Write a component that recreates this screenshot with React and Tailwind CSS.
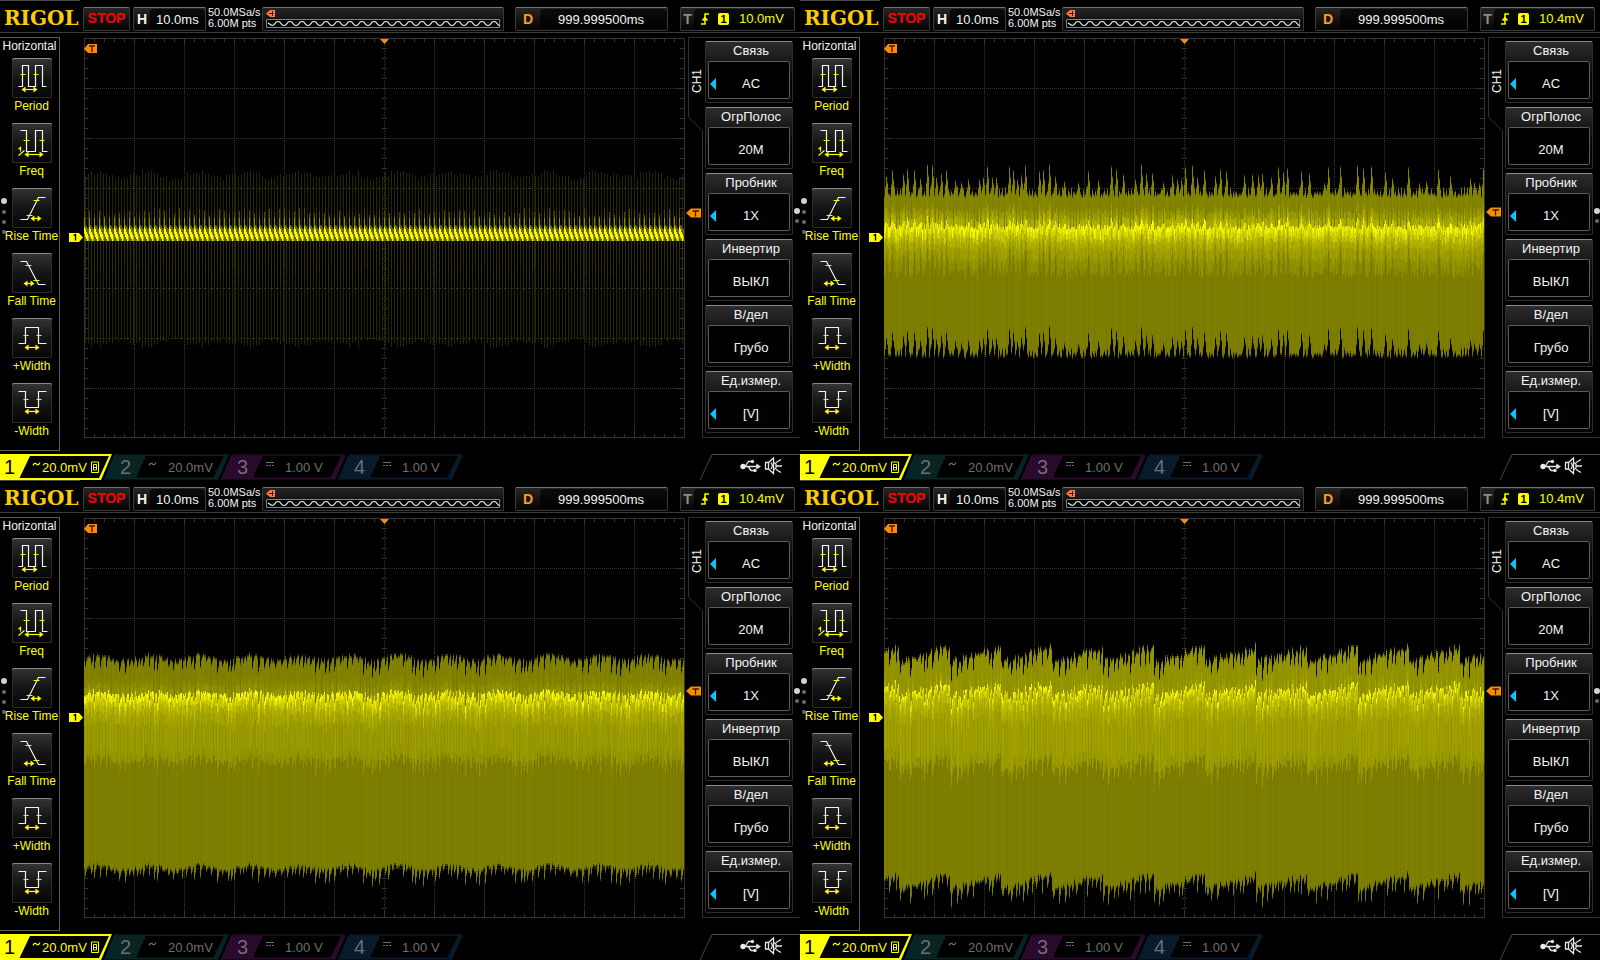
import React from "react";

/* ---------- signal synthesis ---------- */

const X0 = 84;
const X1 = 684;

function makeRandom(seed) {
  let s = seed;
  return () => {
    s = (s * 1664525 + 1013904223) % 4294967296;
    return s / 4294967296;
  };
}

// Collects one-pixel vertical strokes by colour.
function makePainter() {
  const paths = new Map();
  return {
    column(color, x, top, bottom) {
      if (bottom <= top) return;
      const d = `M${x + 0.5} ${Math.round(top)}V${Math.round(bottom)}`;
      paths.set(color, (paths.get(color) || "") + d);
    },
    result: () => [...paths.entries()],
  };
}

function yellow(level) {
  const v = Math.max(0, Math.min(255, Math.round(level / 6) * 6));
  return `rgb(${v},${v},0)`;
}

function ripple(x) {
  return Math.sin(((x - X0) / 50) * Math.PI * 2 - 0.3);
}

function saw(x) {
  return (((x - X0 + 36) % 51) / 51) * 2 - 1;
}

function bandTrace({ seed, top, bottom, bright, midEnd, topLevel, midLevel, glow, follow, offsets, brightSize }) {
  const rnd = makeRandom(seed);
  const offset = offsets(rnd);
  const p = makePainter();
  for (let x = X0; x < X1; x++) {
    const o = offset[x - X0];
    const stripe = x % 3 === 0 ? -4 : 0;
    const t = top - o;
    const b = bottom - o * 0.95;
    const c = bright - o * follow + (rnd() - 0.5) * 4;
    const m = midEnd - o * 0.9 + (rnd() - 0.5) * 6;
    const end = c + brightSize;
    p.column(yellow(topLevel * 0.5), x, t - 2, t);
    p.column(yellow(topLevel + stripe + rnd() * 6), x, t, c);
    p.column(yellow(topLevel + glow * (0.4 + rnd() * 0.4)), x, c - 15, c - 7);
    p.column(yellow(topLevel + glow + rnd() * 14), x, c - 8, c);
    const peak = 212 + rnd() * 43;
    p.column(yellow(peak), x, c, c + brightSize * 0.5);
    p.column(yellow(peak - rnd() * 36), x, c + brightSize * 0.5, end);
    p.column(yellow(176 + rnd() * 36), x, end, end + 5);
    p.column(yellow(midLevel + 14 + rnd() * 22), x, end + 5, end + 12);
    p.column(yellow(midLevel + 4 + rnd() * 14), x, end + 12, end + 22);
    p.column(yellow(midLevel + stripe * 2 + rnd() * 10), x, end + 22, m - 10);
    p.column(yellow(midLevel - 10 + rnd() * 12), x, m - 10, m);
    p.column(yellow(124 + stripe + rnd() * 4), x, m, b);
    p.column(yellow(66), x, b, b + 2);
  }
  return p.result();
}

function sparseTrace() {
  const rnd = makeRandom(11);
  const p = makePainter();
  for (let x = X0 + 1; x < X1; x += 3) {
    const env = Math.sin((x - X0) / 8) * 3 + (rnd() - 0.5) * 6;
    p.column("#272700", x, 175 - env, 343 + env);
    p.column("#323200", x, 212, 262 + rnd() * 30);
  }
  const tooth = [
    [222, 227, 234],
    [225, 229, 237],
    [226, 232, 239],
    [228, 234, 241],
    [229, 236, 241],
  ];
  for (let x = X0; x < X1; x++) {
    const step = (x - X0) % 5;
    const [haze, top, bottom] = tooth[step];
    p.column("#686800", x, haze, 241);
    p.column(step === 4 ? "#b4b400" : "#fafa00", x, top, bottom);
    if (step === 0) {
      p.column("#484800", x, 208 + rnd() * 8, 218);
      p.column("#8c8c00", x, 218, 227);
    }
  }
  return p.result();
}

// Irregular narrow peaks that rise above a lightly toothed floor.
function spikes(rnd) {
  const out = Array.from({ length: X1 - X0 }, (_, i) => (i % 3 === 1 ? rnd() * 7 - 1 : rnd() * 4 - 4));
  let x = 2;
  while (x < out.length) {
    const h = 9 + Math.pow(rnd(), 0.8) * 19;
    out[x] = h;
    if (x > 0) out[x - 1] = Math.max(out[x - 1], h * 0.35);
    if (x + 1 < out.length) out[x + 1] = Math.max(out[x + 1], h * 0.6);
    x += 4 + Math.floor(rnd() * rnd() * 17);
  }
  return out;
}

// Slow wave with sharp dips every few columns.
function dips(wave, amount, depth, noise) {
  return (rnd) => {
    const out = [];
    for (let i = 0; i < X1 - X0; i++) out.push(wave(X0 + i) * amount + (rnd() - 0.5) * noise);
    let i = 1;
    while (i < out.length) {
      const d = (0.25 + rnd() * 0.75) * depth;
      out[i] -= d;
      if (i + 1 < out.length) out[i + 1] -= d * 0.45;
      i += 3 + Math.floor(rnd() * 4);
    }
    return out;
  };
}

const SCREENS = [
  { trigger: "10.0mV", triggerY: 213, trace: sparseTrace() },
  {
    trigger: "10.4mV",
    triggerY: 212,
    trace: bandTrace({
      seed: 7, top: 194, bottom: 353, bright: 227, midEnd: 273, topLevel: 130,
      midLevel: 146, glow: 34, follow: 0.35, brightSize: 10, offsets: spikes,
    }),
  },
  {
    trigger: "10.4mV",
    triggerY: 211,
    trace: bandTrace({
      seed: 23, top: 179, bottom: 387, bright: 213, midEnd: 279, topLevel: 126,
      midLevel: 150, glow: 12, follow: 0.7, brightSize: 8, offsets: dips(ripple, 3, 15, 4),
    }),
  },
  {
    trigger: "10.4mV",
    triggerY: 211,
    trace: bandTrace({
      seed: 41, top: 175, bottom: 401, bright: 209, midEnd: 283, topLevel: 144,
      midLevel: 154, glow: 12, follow: 0.75, brightSize: 6, offsets: dips(saw, 8, 18, 7),
    }),
  },
];

/* ---------- graticule ---------- */

function buildTicks() {
  let d = "";
  for (let x = X0 + 10; x < X1; x += 10) {
    const n = (x - X0) % 50 === 0 ? 7 : 4;
    d += `M${x + 0.5} 38v${n}M${x + 0.5} 438v-${n}M${x + 0.5} 236v4`;
  }
  for (let y = 48; y < 438; y += 10) {
    const n = (y - 38) % 50 === 0 ? 7 : 4;
    d += `M84 ${y + 0.5}h${n}M684 ${y + 0.5}h-${n}M382 ${y + 0.5}h5`;
  }
  return d;
}

function buildGrid() {
  let d = "";
  for (let x = X0 + 50; x < X1; x += 50) d += `M${x + 0.5} 38V438`;
  for (let y = 88; y < 438; y += 50) d += `M84 ${y + 0.5}H684`;
  return d;
}

function buildMemoryWave() {
  let d = "M5 15L9 17.5";
  for (let i = 0; i < 19; i++) d += `M${9 + i * 12} 17.5q2 0 3-2t3-2t3 2t3 2`;
  return d;
}

const TICKS = buildTicks();
const GRID = buildGrid();
const MEMORY_WAVE = buildMemoryWave();

function Plot({ trace, triggerY }) {
  return (
    <svg
      className="h-[420px] min-w-0 flex-1"
      viewBox="60 33 628 420"
      preserveAspectRatio="none"
      role="img"
      aria-label="CH1"
    >
      <g fill="none" shapeRendering="crispEdges">
        <path d={GRID} stroke="#383838" strokeDasharray="1 1" />
        <path d={TICKS} stroke="#343434" />
        <path d="M84.5 38.5H684.5V437.5H84.5Z" stroke="#343434" />
        {trace.map(([color, d]) => (
          <path key={color} d={d} stroke={color} />
        ))}
      </g>
      <path d="M380 39h9l-4.5 5z" fill="#ff8c00" />
      <path d="M84 49l4-5h9v9h-9z" fill="#ff8c00" />
      <path d="M89 46h6M92 46v6" stroke="#3a1c00" strokeWidth="1.5" fill="none" />
      <path d="M69 233h10l4 4.500l-4 4.500h-10z" fill="#ffff00" />
      <path d="M73.500 235.500l2-1v6" stroke="#000" strokeWidth="1.300" fill="none" />
    </svg>
  );
}

/* ---------- measurement icons ---------- */

const MEASURES = [
  { label: "Period", line: "M7 28H11V7H17V28H24V7H31V28H35", marks: "M9 16H14M22 16H27", from: 11, to: 25, y: 31 },
  { label: "Freq", line: "M9 7H15V28H24V7H31V28H36", marks: "M12 17H18M28 17H33M7 25.500l2-1.500V28M7 32L13 27", from: 14, to: 31, y: 31 },
  { label: "Rise Time", line: "M9 31H16L27 9H34", marks: "M15 27H21M22 12H28", from: 20, to: 29, y: 30 },
  { label: "Fall Time", line: "M9 8H15L27 31H34", marks: "M14 12H20M22 27H28", from: 13, to: 22, y: 30 },
  { label: "+Width", line: "M7 25H14V9H27V25H35", marks: "M12 17H17M25 17H30", from: 14, to: 27, y: 29 },
  { label: "-Width", line: "M7 8H14V24H27V8H35", marks: "M12 16H17M25 16H30", from: 14, to: 27, y: 28 },
];

function MeasureIcon({ line, marks, from, to, y }) {
  return (
    <svg className="block h-10 w-10" viewBox="0 0 40 40" fill="none" aria-hidden="true">
      <g transform="translate(-0.5 0.5)">
        <path d={line} stroke="#f4f4f4" strokeWidth="1.2" />
        <path d={marks} stroke="#ffff00" strokeWidth="1.2" />
        <path d={`M${from + 1} ${y}H${to - 1}`} stroke="#ffff00" strokeWidth="1.2" />
        <path
          d={`M${from - 1} ${y}l4-3v6zM${to + 1} ${y}l-4-3v6z`}
          fill="#ffff00"
        />
      </g>
    </svg>
  );
}

function MeasurePanel() {
  return (
    <aside className="relative mt-1 flex h-[414px] w-[60px] shrink-0 flex-col items-center border-t border-r border-b border-[#5c5c5c] pl-1">
      <h2 className="pr-1 text-[12px] leading-4 text-[#f4f4f4]">Horizontal</h2>
      <ul className="mt-1">
        {MEASURES.map((m) => (
          <li key={m.label} className="h-[65px]">
            <button
              type="button"
              className="flex w-14 flex-col items-center whitespace-nowrap text-[12px] leading-4 text-[#ffff00]"
            >
              <span className="block h-10 w-10 rounded-xs bg-linear-to-b from-[#343434] via-[#151515] to-[#060606] shadow-[inset_0_1px_0_#8a8a8a,inset_0_0_0_1px_#2c2c2c]">
                <MeasureIcon {...m} />
              </span>
              {m.label}
            </button>
          </li>
        ))}
      </ul>
      <div className="absolute top-40 left-px flex w-1.5 flex-col items-center gap-1.5">
        <i className="block h-1.5 w-1.5 rounded-full bg-[#d4d4d4]" />
        <i className="block h-1 w-1 rounded-full bg-[#6a6a6a]" />
        <i className="block h-1 w-1 rounded-full bg-[#6a6a6a]" />
        <i className="block h-1 w-1 rounded-full bg-[#6a6a6a]" />
      </div>
    </aside>
  );
}

/* ---------- header ---------- */

const boxClass =
  "flex h-6 items-center rounded-xs border border-[#3a3a3a] border-t-[#757575] bg-linear-to-b from-[#262626] to-[#050505]";

function Header({ trigger }) {
  return (
    <header className="relative flex h-[33px] items-start border-b border-[#3a3a3a] pt-[7px] pr-[5px]">
      <i className="absolute top-0 left-0 block h-px w-20 bg-[#4a4a4a]" />
      <h1 className="w-[83px] shrink-0 pl-1 font-['DejaVu_Serif'] text-[20px] leading-[22px] font-bold text-[#fccb08]">
        RIGOL
      </h1>
      <button
        type="button"
        className={`${boxClass} w-[47px] shrink-0 justify-center text-[14px] leading-4 font-bold text-[#ff0000]`}
      >
        <span className="-mt-0.5">STOP</span>
      </button>
      <button type="button" className={`${boxClass} ml-[3px] w-[73px] shrink-0 text-[#f4f4f4]`}>
        <span className="flex h-5 w-4 items-center justify-center text-[14px] leading-4 font-bold">H</span>
        <span className="flex h-5 flex-1 items-center rounded-sm bg-black/70 pt-0.5 pl-1.5 text-[13px] leading-4">
          10.0ms
        </span>
      </button>
      <p className="ml-0.5 w-[54px] shrink-0 text-[11px] leading-[11px] whitespace-nowrap text-[#f4f4f4]">
        50.0MSa/s
        <br />
        6.00M pts
      </p>
      <div className={`${boxClass} min-w-0 flex-1`}>
        <svg
          className="h-[22px] w-full"
          viewBox="0 0 240 22"
          preserveAspectRatio="none"
          fill="none"
          role="img"
          aria-label="Memory"
        >
          <path d="M3 5.500L7 2H12V9H7Z" fill="#ff7a3c" />
          <path d="M6 5.500h5M9.500 3v5" stroke="#2a1208" />
          <path d="M3.500 11.500H236.500V19.500H3.500Z" fill="#000" stroke="#7c828c" />
          <path d={MEMORY_WAVE} stroke="#f4f4f4" strokeWidth="1.2" />
        </svg>
      </div>
      <button type="button" className={`${boxClass} ml-[11px] w-[153px] shrink-0`}>
        <span className="flex h-5 w-6 items-center justify-center text-[14px] leading-4 font-bold text-[#ff9c14]">
          D
        </span>
        <span className="flex h-5 flex-1 items-center rounded-sm bg-black/70 pt-0.5 pl-[18px] text-[13px] leading-4 text-[#f4f4f4]">
          999.999500ms
        </span>
      </button>
      <button type="button" className={`${boxClass} ml-3 w-[115px] shrink-0`}>
        <span className="flex h-5 w-[13px] items-center justify-center text-[14px] leading-4 font-bold text-[#8c8c8c]">
          T
        </span>
        <span className="flex h-5 flex-1 items-center rounded-sm bg-black/70 text-[13px] leading-4 text-[#ffff00]">
          <svg className="ml-1.5 h-3 w-2.5" viewBox="0 0 10 12" fill="none" aria-hidden="true">
            <path d="M1 11H5V1H9" stroke="#ffff00" strokeWidth="1.500" />
            <path d="M1.500 7.500L5 3.500L8.500 7.500Z" fill="#ffff00" />
          </svg>
          <span className="ml-2 flex h-3 w-[11px] items-center justify-center rounded-xs bg-[#ffff00] text-[11px] leading-3 font-bold text-black">
            1
          </span>
          <span className="ml-2.5">{trigger}</span>
        </span>
      </button>
    </header>
  );
}

/* ---------- soft-key menu ---------- */

const MENU = [
  { title: "Связь", value: "AC", more: true },
  { title: "ОгрПолос", value: "20M" },
  { title: "Пробник", value: "1X", more: true },
  { title: "Инвертир", value: "ВЫКЛ" },
  { title: "В/дел", value: "Грубо" },
  { title: "Ед.измер.", value: "[V]", more: true },
];

function SoftMenu({ triggerY }) {
  return (
    <nav className="relative flex h-[420px] w-28 shrink-0" aria-label="CH1">
      <svg
        className="absolute top-0 -left-3 h-[420px] w-[124px]"
        viewBox="676 33 124 420"
        fill="none"
        aria-hidden="true"
      >
        <path d="M800 37.500H688.500V117L702.500 131V437.500H800" stroke="#303030" />
        <g transform={`translate(0 ${triggerY})`}>
          <path d="M686 0L691-4.500H701V4.500H691Z" fill="#ff8c00" />
          <path d="M692.500-2H699M695.500-2V3.500" stroke="#3a1c00" strokeWidth="1.300" />
        </g>
        <circle cx="797" cy="211" r="3" fill="#d4d4d4" />
        <circle cx="797" cy="221" r="2" fill="#6a6a6a" />
      </svg>
      <div className="relative flex w-[17px] justify-center pt-8 text-[#f4f4f4]">
        <span className="h-7 rotate-180 text-[12px] leading-4 [writing-mode:vertical-rl]">CH1</span>
      </div>
      <ul className="relative flex w-[88px] flex-col gap-1 pt-2">
        {MENU.map((item) => (
          <li key={item.title}>
            <button
              type="button"
              className="flex h-[62px] w-full flex-col rounded-xs border border-[#2e2e2e] border-t-[#8a8a8a] bg-linear-to-b from-[#2c2c2c] to-[#050505] to-70% px-0.5 text-[13px] leading-4 text-[#f4f4f4]"
            >
              <span className="block w-full pt-px pl-1 text-center">{item.title}</span>
              <span className="relative mt-0.5 flex h-[38px] w-full items-center justify-center rounded-xs border border-[#5c5c5c] bg-black pt-2 pl-1">
                {item.more && (
                  <svg className="absolute top-4 left-px h-3 w-1.5" viewBox="0 0 6 12" aria-hidden="true">
                    <path d="M6 0V12L0 6Z" fill="#00c8ff" />
                  </svg>
                )}
                {item.value}
              </span>
            </button>
          </li>
        ))}
      </ul>
    </nav>
  );
}

/* ---------- channel bar ---------- */

const CHANNELS = [
  { id: 2, coupling: "ac", value: "20.0mV", base: "#041c1a", stripe: "#0a302c" },
  { id: 3, coupling: "dc", value: "1.00 V", base: "#200622", stripe: "#3a0e3c" },
  { id: 4, coupling: "dc", value: "1.00 V", base: "#051322", stripe: "#0b253e" },
];

function Coupling({ type }) {
  return (
    <svg className="h-3 w-2.5 shrink-0" viewBox="0 0 10 12" fill="none" stroke="currentColor" aria-hidden="true">
      {type === "ac" ? (
        <path d="M1 4.500Q2.500 1 4.500 3T8 1.500" strokeWidth="1.200" />
      ) : (
        <path d="M1 1.500H9M1 4.500H3M4 4.500H6M7 4.500H9" />
      )}
    </svg>
  );
}

function ChannelTab({ channel, uid }) {
  const pattern = `hatch-${uid}-${channel.id}`;
  return (
    <button type="button" className="relative -ml-2 flex h-[26px] w-[125px] items-center text-[#6e6e6e]">
      <svg className="absolute inset-0 h-[26px] w-[125px]" viewBox="0 0 125 26" fill="none" aria-hidden="true">
        <defs>
          <pattern id={pattern} width="4" height="4" patternUnits="userSpaceOnUse">
            <path d="M-1-1L5 5M-1 3L1 5M3-1L5 1" stroke={channel.stripe} strokeWidth="1.2" />
          </pattern>
        </defs>
        <path d="M10.500 .500H125L114 25.500H0Z" fill={channel.base} />
        <path d="M10.500 .500H125L114 25.500H0Z" fill={`url(#${pattern})`} />
        <path d="M42 2H120L109.500 23.500H32Z" fill="#000" />
      </svg>
      <span className="relative w-11 pl-4 text-left text-[20px] leading-6">{channel.id}</span>
      <span className="relative flex w-5">
        <Coupling type={channel.coupling} />
      </span>
      <span className="relative pt-0.5 text-[13px] leading-4">{channel.value}</span>
    </button>
  );
}

function Footer({ uid }) {
  return (
    <footer className="flex h-[27px] items-start pt-px">
      <button type="button" className="relative flex h-[26px] w-28 items-center text-[#ffff00]">
        <svg className="absolute inset-0 h-[26px] w-28" viewBox="0 0 112 26" aria-hidden="true">
          <path d="M0 0H112L101 26H0Z" fill="#ffff00" />
          <path d="M30 2H109L99 24H19.500Z" fill="#000" />
        </svg>
        <span className="relative w-8 pl-1 text-left text-[20px] leading-6 text-black">1</span>
        <span className="relative flex w-2.5">
          <Coupling type="ac" />
        </span>
        <span className="relative pt-0.5 text-[13px] leading-4">20.0mV</span>
        <svg className="relative ml-1 h-3 w-2" viewBox="0 0 8 12" fill="none" stroke="#ffff00" aria-label="BW">
          <path d="M.500 1H7.500V11.500H.500ZM2.500 3.500H5.500V9H2.500ZM2.500 6.500H5.500" />
        </svg>
      </button>
      {CHANNELS.map((c) => (
        <ChannelTab key={c.id} channel={c} uid={uid} />
      ))}
      <svg className="ml-auto h-[26px] w-[100px]" viewBox="700 454 100 26" fill="none" role="img" aria-label="USB, sound">
        <path d="M700 480L712 454.500H800" stroke="#484848" />
        <path d="M740 466.500L744 464V469Z" fill="#e8e8e8" />
        <g stroke="#e8e8e8" strokeWidth="1.3">
          <path d="M742 466.500H757M745 466.500L748.500 461.500H752M748 466.500L751 470.500H754.500" />
          <circle cx="743" cy="466.500" r="2" fill="#e8e8e8" />
          <circle cx="752.500" cy="461.500" r="1" fill="#e8e8e8" />
          <path d="M754 469.500h2v2h-2z" fill="#e8e8e8" strokeWidth="1" />
          <path d="M756.500 464L760.500 466.500L756.500 469Z" fill="#e8e8e8" strokeWidth=".5" />
        </g>
        <g stroke="#e8e8e8" strokeWidth="1.3">
          <path d="M765.500 462.500H768.500L773.500 458V473.500L768.500 469H765.500Z" />
          <path d="M768.500 462.500V469M771 462.500L772.500 465.800L771 469M776 462.500L781 459.500M776 466H782M776 469.500L781 472.500M773.500 462L776 464V468L773.500 470" />
        </g>
      </svg>
    </footer>
  );
}

function Scope({ screen, uid }) {
  return (
    <section className="min-w-[720px] overflow-hidden bg-black">
      <Header trigger={screen.trigger} />
      <div className="flex">
        <MeasurePanel />
        <Plot trace={screen.trace} triggerY={screen.triggerY} />
        <SoftMenu triggerY={screen.triggerY} />
      </div>
      <Footer uid={uid} />
    </section>
  );
}

export default function App() {
  return (
    <main className="grid min-h-screen grid-cols-2 content-start bg-black font-['Liberation_Sans',Arial,sans-serif]">
      {SCREENS.map((screen, i) => (
        <Scope key={i} uid={i} screen={screen} />
      ))}
    </main>
  );
}
